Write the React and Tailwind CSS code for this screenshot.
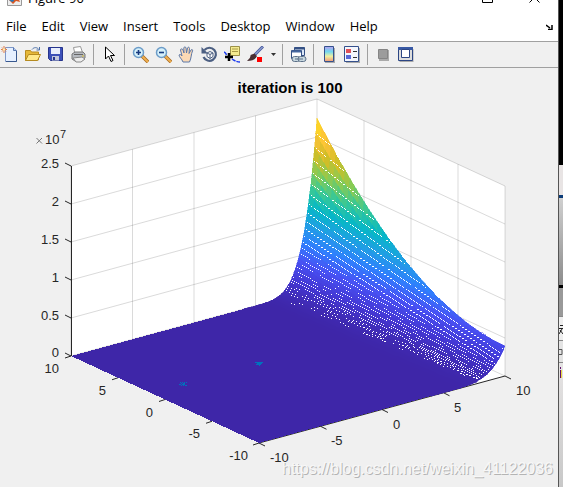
import React from "react";

const STOPS = [
  [62, 38, 168], [68, 56, 213], [72, 82, 244], [47, 128, 253], [33, 158, 228],
  [6, 183, 199], [55, 200, 151], [135, 203, 84], [208, 190, 40], [254, 194, 56], [250, 225, 28],
];
const parula = (t) => {
  const p = Math.max(0, Math.min(0.9999, t)) * 10;
  const i = Math.floor(p);
  const f = p - i;
  const c = STOPS[i].map((a, j) => Math.round(a + (STOPS[i + 1][j] - a) * f));
  return `rgb(${c.join(",")})`;
};

const rise = (u) => (u <= 0.7 ? 0 : Math.pow((u - 0.7) / 0.3, 5.4));
const height = (u, v) => rise(u) * (30 + 141 * v * v);
const project = (u, v, h) => [259 + 246 * u - 188 * v, 443 - 67 * u - 87 * v - h];
const surfacePoint = (u, v) => project(u, v, height(u, v)).map((n) => n.toFixed(1)).join(",");

function buildPatches() {
  const out = [];
  const nu = 60;
  const nv = 40;
  for (let i = nu - 1; i >= 0; i--) {
    const u0 = 0.7 + (0.3 * i) / nu;
    const u1 = 0.7 + (0.3 * (i + 1)) / nu;
    for (let j = nv - 1; j >= 0; j--) {
      const v0 = j / nv;
      const v1 = (j + 1) / nv;
      const t = height((u0 + u1) / 2, (v0 + v1) / 2) / 168;
      out.push({
        points: [surfacePoint(u0, v0), surfacePoint(u1, v0), surfacePoint(u1, v1), surfacePoint(u0, v1)].join(" "),
        fill: parula(t),
      });
    }
  }
  return out;
}

function scatter(a, b) {
  const s = Math.sin(a * 12.9898 + b * 78.233) * 43758.5453;
  return s - Math.floor(s);
}

function buildSpeckles() {
  let d = "";
  for (let k = 1; k <= 32; k++) {
    const u = 1 - 0.005 * k;
    const h = 171 * rise(u);
    const [x0, y0] = project(u, 1, h);
    const slope = 0.34 + 0.5 * Math.pow(h / 171, 0.45);
    const dense = h > 50;
    const step = dense ? 1 : h > 14 ? 2 : 3;
    const keep = h > 35 ? 1 : h > 14 ? 0.8 : h > 6 ? 0.6 : 0.3;
    for (let x = Math.round(x0) + 1, n = 0; x < 503; x += step, n++) {
      const y = Math.round(y0 + (x - x0) * slope);
      const v = (505 - x) / 188;
      const top = x < 317 ? 0 : 346 - 87 * v - 141 * v * v;
      const edge = (x - 259) / 246;
      const floor = 443 - 67 * edge - height(edge, 0);
      if (y < top + 3 || (x > 460 && y > floor - 3)) continue;
      if (dense && n % 3 === 1) continue;
      if (dense ? (n + k * 7) % 27 > 24 : (n + k * 5) % 13 > 9) continue;
      if (scatter(Math.floor(n / 2), k) > keep) continue;
      d += `M${x} ${y}h1v1h-1z`;
    }
  }
  return d;
}

const PATCHES = buildPatches();
const SPECKLES = buildSpeckles();

const seg = (a, b) => `M${a[0]} ${a[1]}L${b[0]} ${b[1]}`;
const GRID = [
  ...[0, 0.25, 0.5, 0.75, 1].map((u) => seg(project(u, 1, 0), project(u, 1, 190))),
  ...[0, 0.25, 0.5, 0.75].map((v) => seg(project(1, v, 0), project(1, v, 190))),
  ...[0, 38, 76, 114, 152, 190].map((h) => seg(project(0, 1, h), project(1, 1, h)) + seg(project(1, 1, h), project(1, 0, h))),
].join("");

const TICKS = [
  ...[0, 38, 76, 114, 152, 190].map((h) => `M71 ${356 - h}l-6 -3`),
  ...[0, 0.25, 0.5, 0.75, 1].map((u) => `M${259 + 246 * u} ${443 - 67 * u}l6 3`),
  ...[0, 0.25, 0.5, 0.75, 1].map((v) => `M${259 - 188 * v} ${443 - 87 * v}l-6 2`),
].join("");

const Z_LABELS = [["2.5", 168], ["2", 206], ["1.5", 244], ["1", 282], ["0.5", 320], ["0", 357]];
const Y_LABELS = [["10", 59, 373], ["5", 106, 395], ["0", 153, 417], ["-5", 200, 438], ["-10", 248, 460]];
const X_LABELS = [["-10", 270, 462], ["-5", 331, 445], ["0", 393, 429], ["5", 454, 412], ["10", 516, 395]];

function Plot() {
  return (
    <svg viewBox="0 68 558 419" className="block w-full" role="img" aria-label="Surface plot, iteration is 100">
      <polygon points="71,356 71,166 317,99 505,186 505,376 259,443" fill="#fff" />
      <path d={GRID} stroke="#262626" strokeOpacity="0.17" fill="none" />
      <path d={TICKS + "M71.5 356V166M259 443L505 376"} stroke="#262626" fill="none" />
      <g shapeRendering="crispEdges">
        <polygon points="71,356 244,309 431,396 259,443" fill="#3e26a8" />
        {PATCHES.map((p, i) => (
          <polygon key={i} points={p.points} fill={p.fill} stroke={p.fill} strokeWidth="0.5" />
        ))}
        <path d={SPECKLES} fill="#fff" />
        <path d="M255 362h8v1h-8zM257 363h5v1h-5zM256 364h2v1h-2zM258 364h3v1h-3zM259 365h1v1h-1zM180 382h1v1h-1zM182 382h1v1h-1zM184 382h1v1h-1zM186 382h1v1h-1zM181 383h1v1h-1zM183 383h2v1h-2zM179 384h2v1h-2zM182 384h3v1h-3zM181 385h1v1h-1zM183 385h1v1h-1zM185 385h2v1h-2z" fill="#0072bd" />
      </g>
      <g fill="#262626" className="font-['Liberation_Sans',Arial,sans-serif] text-[13px]">
        {Z_LABELS.map(([t, y]) => <text key={t} x="59" y={y} textAnchor="end">{t}</text>)}
        {Y_LABELS.map(([t, x, y]) => <text key={t} x={x} y={y} textAnchor="end">{t}</text>)}
        {X_LABELS.map(([t, x, y]) => <text key={t} x={x} y={y}>{t}</text>)}
        <text x="45" y="144">10</text>
        <text x="60" y="138" className="text-[11px]">7</text>
        <path d="M36.500 138l5.500 5.500M42 138l-5.500 5.500" stroke="#777" />
        <text x="290" y="93" textAnchor="middle" fill="#000" className="text-[15px] font-bold">iteration is 100</text>
      </g>
      <g className="font-['Liberation_Sans',Arial,sans-serif] text-[16px]">
        <text x="283" y="475" fill="#b4b4b4">https://blog.csdn.net/weixin_41122036</text>
        <text x="282" y="474" fill="#f7f7f7">https://blog.csdn.net/weixin_41122036</text>
      </g>
    </svg>
  );
}

const Zoom = ({ plus }) => (
  <>
    <path d="M10 10l6 6" stroke="#a86a20" strokeWidth="3.500" />
    <path d="M10 10l6 6" stroke="#f0b050" strokeWidth="2" />
    <circle cx="6.500" cy="6.500" r="5" fill="#d5f0fa" stroke="#6c9cc8" strokeWidth="1.500" />
    <path d={plus ? "M4 6.500h5M6.500 4v5" : "M4 6.500h5"} stroke="#173a80" strokeWidth="1.600" />
  </>
);

const ICONS = {
  New: <><path d="M4.500 1.500h8l3 3v11h-11z" fill="#e6f0ff" stroke="#7d97c8" /><path d="M12.500 1.500v3h3" fill="#b8ccec" stroke="#5a78b0" /><path d="M15.500 5v10.500H5" stroke="#38588e" fill="none" /><path d="M3 0v7M0 3.500h6M1 1.500l4 4M5 1.500l-4 4" stroke="#e07a48" /><circle cx="3" cy="3.500" r="1.200" fill="#fff0b0" /></>,
  Open: <><path d="M1.500 14.500V4.500h5l1 1.500h7v8z" fill="#e6b838" stroke="#b88c20" /><path d="M1.500 14.500l3-6h12l-3 6z" fill="#ffe98a" stroke="#b58a20" /><path d="M8 3.500c2-2.500 5-2.500 7 0M15.500 1v3h-3" stroke="#4c70a8" fill="none" /></>,
  Save: <><path d="M1.500 1.500h14v13h-12l-2-2z" fill="#3c50b8" stroke="#26348c" /><path d="M4 2h9v6H4z" fill="#e8eefc" /><path d="M5 10h7v4.500H5z" fill="#c2c8dc" /><path d="M6 11h2v3H6z" fill="#26348c" /></>,
  Print: <><path d="M5 8L3.500 1.500l7-1L13 8" fill="#fff" stroke="#999" /><path d="M2 8l3-2h8l2 2v4l-3 3H5l-3-2z" fill="#b6bac0" stroke="#777" /><path d="M4 8.500h9" stroke="#666" /><path d="M3 12l9-1 3 2-4 3H6z" fill="#eee" stroke="#888" /><path d="M12 10h2" stroke="#d8bc30" /></>,
  Pointer: <path d="M4.500 1v12l3-3 2.500 5.500 2-1-2.500-5h4z" fill="#fff" stroke="#000" />,
  "Zoom in": <Zoom plus />,
  "Zoom out": <Zoom />,
  Pan: <path d="M5 16c-1-3-4-5-4-7 1-1 2-.500 3 1L2.500 4c0-1.500 2-1.500 2.500 0l1 3-.200-5c.2-1.500 2-1.500 2.200 0l.5 5 1-5c.5-1.300 2-1 2 .5l-.5 5 2-3.500c1-1 2-.2 1.500 1-1.500 3-1 7-3 11z" fill="#fbd9b5" stroke="#5c78a8" />,
  "Rotate 3D": <><path d="M3.500 4a6.500 6.500 0 1 1-1 7" fill="none" stroke="#4c5f82" strokeWidth="2.200" /><path d="M.500 1v6.500H7z" fill="#4c5f82" /><path d="M6 7l3-1.500L12 7v3.500l-3 2-3-2zM6 7l3 1.500L12 7M9 8.500v4" fill="#fff" stroke="#4c5f82" /></>,
  "Data cursor": <><path d="M6.500.500h9v9h-9z" fill="#f4eb90" stroke="#9c9148" /><path d="M8 3h6M8 5.500h6" stroke="#a89a48" /><path d="M0 6q2 1 3 4M8 13q4 3 8 3" stroke="#1838f0" fill="none" strokeWidth="1.500" strokeDasharray="4 1" /><path d="M5 7v8M1 11h8" stroke="#000" strokeWidth="2.500" /></>,
  Brush: <><path d="M16 .500L8 8.500" stroke="#4a5ca0" strokeWidth="3" /><path d="M15.500 1L8 8.500" stroke="#b8c8ee" /><path d="M7.500 7.500l2.500 2.500q-2 5-10 5 4-3 3.500-6z" fill="#4a3034" /><path d="M10 11h5v5h-5z" fill="#f00" /></>,
  Link: <><path d="M4.500 1.500h10v8h-10z" fill="#dbe7f8" stroke="#345084" /><path d="M4.500 2.500h10" stroke="#345084" strokeWidth="2" /><path d="M1.500 4.500h10v8h-10z" fill="#fff" stroke="#345084" /><path d="M2 5.500h9" stroke="#4668a0" strokeWidth="2" /><rect x="2" y="10.500" width="8" height="5" rx="2.500" fill="#c8d8e0" stroke="#5c7088" /><rect x="8" y="10.500" width="8" height="5" rx="2.500" fill="#c8d8e0" stroke="#5c7088" /><path d="M5 13h8" stroke="#5c7088" /></>,
  Colorbar: <><defs><linearGradient id="bar" x2="0" y2="1"><stop stopColor="#b8a0f0" /><stop offset=".35" stopColor="#70d8f0" /><stop offset=".65" stopColor="#f0f0a0" /><stop offset="1" stopColor="#f09878" /></linearGradient></defs><path d="M4 2h10v15H4z" fill="#aaa" /><path d="M3.500.500h9v15h-9z" fill="url(#bar)" stroke="#34508c" /></>,
  Legend: <><path d="M2 2h14v15H2z" fill="#aaa" /><path d="M.500.500h14v15h-14z" fill="#f4f6fc" stroke="#34508c" /><path d="M2 3h5v4H2z" fill="#e05058" /><path d="M2 9h5v4H2z" fill="#5868d8" /><path d="M9 5.500h4M9 11.500h4" stroke="#333" /></>,
  Hide: <><path d="M4 4h10v11H4z" fill="#aaa" /><path d="M3.500 3.500h9v9h-9z" fill="#9c9c9c" stroke="#858585" /></>,
  Dock: <><path d="M1.500 3h14v13h-14z" fill="#aaa" /><path d="M.500 1.500h14v13h-14z" fill="#ddd" stroke="#2c4684" /><path d="M0 2.500h15" stroke="#3858a4" strokeWidth="3" /><path d="M3.500 3.500h8v8h-8z" fill="#fff" stroke="#2c4684" /></>,
};

function Tool({ name }) {
  return (
    <button aria-label={name} className="flex h-5 w-[23px] shrink-0 items-center justify-center">
      <svg width="17" height="17" viewBox="0 0 17 17" fill="none">{ICONS[name]}</svg>
    </button>
  );
}

const Divider = () => <span className="mr-1 ml-[3px] h-[21px] w-px shrink-0 bg-[#a0a0a0]" />;

const MENUS = ["File", "Edit", "View", "Insert", "Tools", "Desktop", "Window", "Help"];

export default function App() {
  return (
    <div className="flex min-h-screen overflow-hidden bg-[#f0f0f0] font-['Open_Sans','Noto_Sans',sans-serif]">
      <main className="flex min-w-0 flex-1 flex-col">
        <header className="flex h-3 items-end justify-between overflow-hidden bg-white pl-[7px]">
          <div className="flex items-end gap-1.5 pb-1.5">
            <svg width="15" height="15" viewBox="0 0 15 15"><path d="M.500.500h14v14H.500z" fill="#eee" stroke="#999" /><path d="M2 9l4-3 3-4 4 9-4-1-3 3z" fill="#d85824" /><path d="M2 9l4-3 1 4-2 1z" fill="#2878b8" /></svg>
            <span className="text-[13px] leading-4">Figure 90</span>
          </div>
          <div className="flex gap-9 pr-[18px] pb-[9px]">
            <svg width="11" height="11" viewBox="0 0 11 11"><path d="M.500.500h10v10H.500z" fill="none" stroke="#000" /></svg>
            <svg width="11" height="11" viewBox="0 0 11 11"><path d="M.500.500l10 10M10.500.500l-10 10" stroke="#000" /></svg>
          </div>
        </header>
        <nav className="flex h-[29px] items-center gap-[15px] bg-white pl-1.5 text-[13px] text-black">
          {MENUS.map((m) => <button key={m}>{m}</button>)}
          <svg className="mr-[5px] ml-auto" width="7" height="6" viewBox="0 0 7 6"><path d="M0 1l4 3M6 1v4.500H2" stroke="#000" strokeWidth="1.500" fill="none" /></svg>
        </nav>
        <div role="toolbar" className="flex h-[27px] items-center border-y border-[#a0a0a0]">
          <div className="-ml-0.5 flex"><Tool name="New" /><Tool name="Open" /><Tool name="Save" /><Tool name="Print" /></div>
          <Divider /><Tool name="Pointer" /><Divider />
          <Tool name="Zoom in" /><Tool name="Zoom out" /><Tool name="Pan" /><Tool name="Rotate 3D" /><Tool name="Data cursor" /><Tool name="Brush" />
          <button aria-label="Brush options" className="flex w-3 shrink-0 justify-center"><svg width="5" height="3" viewBox="0 0 5 3"><path d="M0 0h5L2.500 3z" fill="#333" /></svg></button>
          <Divider /><Tool name="Link" /><Divider /><Tool name="Colorbar" /><Tool name="Legend" /><Divider /><Tool name="Hide" /><Tool name="Dock" />
        </div>
        <Plot />
      </main>
      <aside className="flex w-[5px] shrink-0 flex-col border-l border-[#555] bg-[#ddd]">
        <div className="h-[165px] shrink-0 bg-black" />
        <div className="h-[30px] shrink-0 bg-[#e8e4e4]" />
        <div className="h-[3px] shrink-0 bg-[#0c3c78]" />
        <div className="h-[87px] shrink-0 bg-linear-to-b from-[#d0d0d0] to-[#8c8c8c]" />
        <div className="h-[3px] shrink-0 bg-black" />
        <div className="h-7 shrink-0 bg-[#999]" />
        <div className="flex h-[25px] shrink-0 items-center border-y border-[#888] bg-[#eee]">
          <svg width="4" height="12" viewBox="0 0 4 12"><path d="M1 2.500h3M0 5.500h4M3 6l-3 5M1 7l3 4" stroke="#222" fill="none" /></svg>
        </div>
        <div className="flex h-[22px] shrink-0 items-center border-b border-[#888] bg-[#e4e4e4]">
          <svg width="4" height="8" viewBox="0 0 4 8"><path d="M0 1.500h3v5H0" stroke="#555" fill="none" /></svg>
        </div>
        <div className="flex-1 bg-linear-to-b from-[#e6e4e4] to-[#c8c8c8] pt-1">
          <svg width="4" height="11" viewBox="0 0 4 11"><path d="M1.500 0v2M1.500 3v8" stroke="#60106c" /><path d="M2.500 3v8" stroke="#e8d840" /></svg>
        </div>
      </aside>
    </div>
  );
}
